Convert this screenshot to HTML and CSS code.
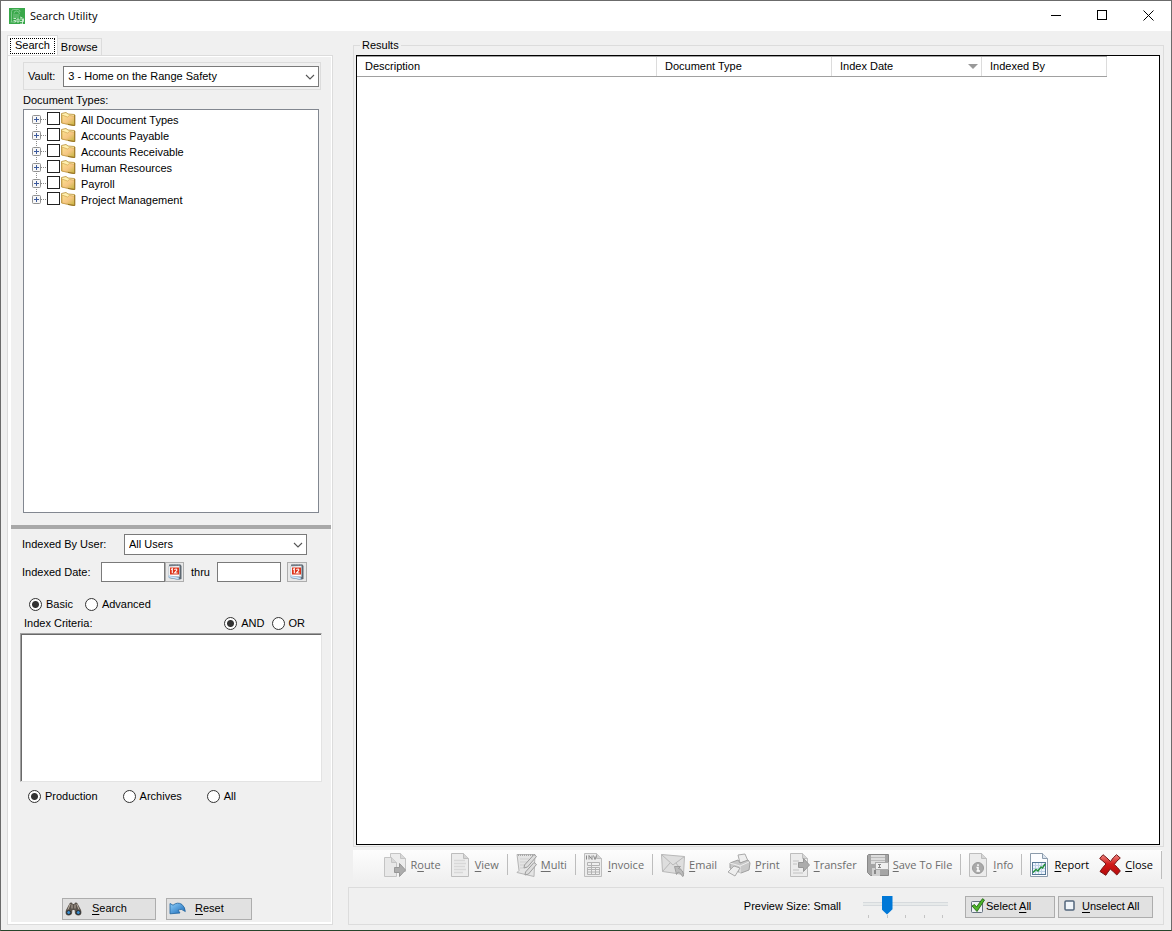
FILE: index.html
```html
<!DOCTYPE html>
<html lang="en">
<head>
<meta charset="utf-8">
<title>Search Utility</title>
<link rel="stylesheet" href="styles.css">
</head>
<body>
<svg class="defs" aria-hidden="true">
  <defs>
    <linearGradient id="gold" x1="0" y1="0" x2="1" y2="1"><stop offset="0" stop-color="#fbe28c"/><stop offset=".5" stop-color="#f6c684"/><stop offset="1" stop-color="#c2b53c"/></linearGradient>
    <linearGradient id="blue" x1="0" y1="0" x2="1" y2="1"><stop offset="0" stop-color="#8fd0fb"/><stop offset="1" stop-color="#1464b4"/></linearGradient>
    <linearGradient id="red" x1="0" y1="0" x2="0" y2="1"><stop offset="0" stop-color="#f08a84"/><stop offset=".45" stop-color="#d01a1a"/><stop offset="1" stop-color="#b50808"/></linearGradient>
    <symbol id="chevron" viewBox="0 0 10 6"><path d="M1 1l4 4 4-4" fill="none" stroke="#555" stroke-width="1.1"/></symbol>
    <symbol id="expander" viewBox="0 0 14 16"><path d="M4.500 0v16M9 8.500h5" stroke="#8a8a8a" stroke-dasharray="1 1"/><rect x=".5" y="4.500" width="8" height="8" rx="1" fill="#f7f7f7" stroke="#919191"/><path d="M2 8.500h5M4.500 6v5" stroke="#3c5a9c"/></symbol>
    <symbol id="folder" viewBox="0 0 15 14"><path d="M.5 1.500L5 .5l2 1.500 6.500.5v8l-1 3L.5 11z" fill="#fff0b0" stroke="#b58c32" stroke-width=".8"/><path d="M1 3l5.500 2 2-1.500 5 .7v9.200L1.200 11z" fill="url(#gold)" stroke="#c79a48" stroke-width=".6"/><path d="M13.800 3v10.500L7 12.500" fill="none" stroke="#93701f"/></symbol>
    <symbol id="calendar" viewBox="0 0 14 16"><path d="M2 .5h10.500l1 1.500v13l-3 .8L1 14z" fill="#5d6872"/><path d="M.8 2.200L11.500 1.800v11H.8z" fill="#fff" stroke="#a2aebb" stroke-width=".6"/><path d="M1 1.200h11" stroke="#727c86" stroke-width="1.400" stroke-dasharray="1 .6"/><rect x="2" y="3.500" width="9" height="7" fill="#dc3219"/><path d="M3 5.500l1.300-.8v4.600M6.300 5.500q2.800-1.300 2.500.8L6.500 9h3" fill="none" stroke="#fff" stroke-width="1.100"/><path d="M.8 11.800l10 1.700v2l-10-2z" fill="#dcefff" stroke="#7ea8d0" stroke-width=".5"/></symbol>
    <symbol id="sheet" viewBox="0 0 18 24"><path d="M.5.500h12l5 5v18H.500z" fill="#ececec" stroke="#bdbdbd"/><path d="M12.500.500v5h5" fill="#d5d5d5" stroke="#bdbdbd"/></symbol>
    <symbol id="arrow" viewBox="0 0 12 14"><path d="M.5 4.500h5v-4l6 6.500-6 6.500v-4h-5z" fill="#acacac" stroke="#979797"/></symbol>
  </defs>
</svg>
<div class="window">
  <header class="titlebar">
    <svg class="logo" width="16" height="16" viewBox="0 0 16 16" aria-hidden="true"><rect width="16" height="16" fill="#39a84a"/><path d="M2.500 14V3.500Q2.500 1.500 4.500 1.500h4.500q2 0 2 2.500M1.500 14h3M4 7h6.500M4 9h6M5 5.500Q5 3 7.500 3T10.500 6" fill="none" stroke="#8fd09a" stroke-width=".8"/><path d="M4.500 10.500h2.500M4.500 12.500h2v1.500H4.500M8 14v-3h2v3zM11 11h2.500v5H11M11 13.500h3.500v-3M11 9l2.500 1" fill="none" stroke="#d4efd8" stroke-width=".9"/></svg>
    <h1 class="title">Search Utility</h1>
    <div class="window-controls">
      <button class="window-button" aria-label="Minimize"><svg width="11" height="11"><path d="M0 5.500h10" stroke="#000"/></svg></button>
      <button class="window-button" aria-label="Maximize"><svg width="11" height="11"><rect x=".5" y=".5" width="9" height="9" fill="none" stroke="#000"/></svg></button>
      <button class="window-button" aria-label="Close window"><svg width="11" height="11"><path d="M.5.500l10 10M10.500.500l-10 10" stroke="#000"/></svg></button>
    </div>
  </header>
  <main class="content">
    <section class="sidebar">
      <div class="tabs" role="tablist">
        <button class="tab tab-active" role="tab" aria-selected="true"><span class="focus">Search</span></button>
        <button class="tab" role="tab" aria-selected="false">Browse</button>
      </div>
      <div class="tab-panel">
        <div class="pane pane-types">
          <div class="vault">
            <label for="vault">Vault:</label>
            <div class="select-box"><select id="vault"><option>3 - Home on the Range Safety</option></select><svg class="chevron"><use href="#chevron"/></svg></div>
          </div>
          <div class="types-label">Document Types:</div>
          <ul class="tree">
            <li class="node"><button class="expand" aria-label="Expand"><svg width="14" height="16"><use href="#expander"/></svg></button><label class="node-label"><input type="checkbox" class="check"><svg width="15" height="14"><use href="#folder"/></svg><span class="node-text">All Document Types</span></label></li>
            <li class="node"><button class="expand" aria-label="Expand"><svg width="14" height="16"><use href="#expander"/></svg></button><label class="node-label"><input type="checkbox" class="check"><svg width="15" height="14"><use href="#folder"/></svg><span class="node-text">Accounts Payable</span></label></li>
            <li class="node"><button class="expand" aria-label="Expand"><svg width="14" height="16"><use href="#expander"/></svg></button><label class="node-label"><input type="checkbox" class="check"><svg width="15" height="14"><use href="#folder"/></svg><span class="node-text">Accounts Receivable</span></label></li>
            <li class="node"><button class="expand" aria-label="Expand"><svg width="14" height="16"><use href="#expander"/></svg></button><label class="node-label"><input type="checkbox" class="check"><svg width="15" height="14"><use href="#folder"/></svg><span class="node-text">Human Resources</span></label></li>
            <li class="node"><button class="expand" aria-label="Expand"><svg width="14" height="16"><use href="#expander"/></svg></button><label class="node-label"><input type="checkbox" class="check"><svg width="15" height="14"><use href="#folder"/></svg><span class="node-text">Payroll</span></label></li>
            <li class="node"><button class="expand" aria-label="Expand"><svg width="14" height="16"><use href="#expander"/></svg></button><label class="node-label"><input type="checkbox" class="check"><svg width="15" height="14"><use href="#folder"/></svg><span class="node-text">Project Management</span></label></li>
          </ul>
        </div>
        <div class="splitter"></div>
        <div class="pane pane-criteria">
          <div class="user-row">
            <label class="user-label" for="user">Indexed By User:</label>
            <div class="select-box"><select id="user"><option>All Users</option></select><svg class="chevron"><use href="#chevron"/></svg></div>
          </div>
          <div class="date-row">
            <label class="date-label" for="from">Indexed Date:</label>
            <input class="date" id="from" type="text">
            <button class="date-button" aria-label="Choose start date"><svg width="14" height="16"><use href="#calendar"/></svg></button>
            <label class="thru" for="to">thru</label>
            <input class="date" id="to" type="text">
            <button class="date-button date-button-apart" aria-label="Choose end date"><svg width="14" height="16"><use href="#calendar"/></svg></button>
          </div>
          <div class="mode-row">
            <label class="option"><input type="radio" class="radio" name="mode" checked>Basic</label>
            <label class="option"><input type="radio" class="radio" name="mode">Advanced</label>
          </div>
          <div class="criteria-head">
            <label for="criteria">Index Criteria:</label>
            <div class="operators">
              <label class="option"><input type="radio" class="radio" name="op" checked>AND</label>
              <label class="option"><input type="radio" class="radio" name="op">OR</label>
            </div>
          </div>
          <textarea class="criteria" id="criteria"></textarea>
          <div class="source-row">
            <label class="option"><input type="radio" class="radio" name="source" checked>Production</label>
            <label class="option"><input type="radio" class="radio" name="source">Archives</label>
            <label class="option"><input type="radio" class="radio" name="source">All</label>
          </div>
          <div class="actions">
            <button class="button button-search"><svg width="17" height="14" viewBox="0 0 17 14"><path d="M4.500 1.500Q5.500 0 7 .8L7.800 2h1.400L10 .8q1.500-.8 2.500.7L16 8q1.500 5-2.500 5.500-4 0-3.700-4L9.500 8h-2l-.3 1.500q.3 4-3.700 4Q-.5 13 1 8z" fill="#5a534c"/><path d="M5.200 2L3 7.500M11.800 2L14 7.500M7 2.500v4M10 2.500v4" stroke="#b9aea2"/><circle cx="3.700" cy="10.500" r="2" fill="#3b8ed0" stroke="#2b2b2b"/><circle cx="13.300" cy="10.500" r="2" fill="#3b8ed0" stroke="#2b2b2b"/></svg><span><u>S</u>earch</span></button>
            <button class="button button-reset"><svg width="17" height="13" viewBox="0 0 17 13"><path d="M1 1.500l3 1.700Q8.500-.5 13 2.500q3 2.500 3.300 7Q12 6 9 8l2 3L1 11.800z" fill="url(#blue)" stroke="#20639e" stroke-width=".8"/></svg><span><u>R</u>eset</span></button>
          </div>
        </div>
      </div>
    </section>
    <section class="main">
      <fieldset class="results">
        <legend>Results</legend>
        <div class="list">
          <table class="table">
            <thead><tr><th class="col-description">Description</th><th class="col-type">Document Type</th><th class="col-date"><span class="sorted">Index Date<svg width="10" height="5"><path d="M0 0h10L5 5z" fill="#999"/></svg></span></th><th class="col-by">Indexed By</th></tr></thead>
          </table>
        </div>
      </fieldset>
      <div class="toolbar" role="toolbar">
        <button class="tool" disabled><svg width="22" height="24" viewBox="0 0 22 24"><path d="M6.500.500h10l5 5v13h-15z" fill="#ececec" stroke="#c4c4c4"/><path d="M16.500.500v5h5" fill="#d8d8d8" stroke="#c4c4c4"/><path d="M.5 4.500h7l5 5v14H.5z" fill="#e8e8e8" stroke="#c4c4c4"/><path d="M7.500 4.500v5h5" fill="#d8d8d8" stroke="#c4c4c4"/><path d="M10.500 14.500h5v-4l6 6.500-6 6.500v-4h-5z" fill="#acacac" stroke="#979797"/></svg><span>R<u>o</u>ute</span></button>
        <button class="tool tool-sheet" disabled><svg width="18" height="24" viewBox="0 0 18 24"><use href="#sheet"/><path d="M3 7.500h11M3 10.500h12M3 13.500h11M3 16.500h12M3 19.500h9" stroke="#d8d8d8" stroke-width="1.500"/></svg><span><u>V</u>iew</span></button>
        <span class="separator"></span>
        <button class="tool" disabled><svg width="21" height="24" viewBox="0 0 21 24"><path d="M1 1.500h18l-1 22L1 19.500l2-2z" fill="#e4e4e4" stroke="#b5b5b5"/><path d="M2 2h17" stroke="#a8a8a8" stroke-width="2" stroke-dasharray="1 1"/><path d="M4 6h9M4 9h8M4 12h5M4 15h4" stroke="#cfcfcf"/><path d="M8.500 12L18 1.500l2.500 2L11.500 14l-3.500 1zM9.500 19L18 9.500l2.500 2L12.500 21 9 22z" fill="#ddd" stroke="#9c9c9c"/></svg><span><u>M</u>ulti</span></button>
        <span class="separator"></span>
        <button class="tool tool-sheet" disabled><svg width="18" height="24" viewBox="0 0 18 24"><use href="#sheet"/><path d="M2.500 2.500v4M5 6.500v-4l3 4v-4M9.500 2.500l1.500 4 1.500-4" fill="none" stroke="#888"/><path d="M3.500 9.500h12v3h-12zM3.500 14.500h12v7h-12zM3.500 16.500h12M3.500 19h12M7.500 9.500v12M11.500 14.500v7" fill="#eee" stroke="#b2b2b2"/></svg><span><u>I</u>nvoice</span></button>
        <span class="separator"></span>
        <button class="tool" disabled><svg width="24" height="24" viewBox="0 0 24 24"><path d="M.5 1.500l23 2-1 18-21-3z" fill="#dedede" stroke="#b8b8b8"/><path d="M.5 1.500L12 12 23.500 3.500M1.500 18.500L9 10M15 10l8 11" fill="none" stroke="#b8b8b8"/><path d="M13.500 13.500h6l-2 2q5 1 5 7.500l-1 .5q-1.500-3.500-4.500-4.500l-1.500 2.500z" fill="#bbb" stroke="#949494" stroke-width=".8"/></svg><span><u>E</u>mail</span></button>
        <button class="tool" disabled><svg width="24" height="24" viewBox="0 0 24 24"><path d="M11 2l7-1 3 7-8 2z" fill="#eee" stroke="#aaa"/><path d="M3 10l8-3 2 3 8-3 2 3-1 7-8 3-11-5z" fill="#c8c8c8" stroke="#a0a0a0"/><path d="M3 10l10 3 9-4M13 13v7" fill="none" stroke="#eee"/><path d="M1 19l6-6 6 2-5 8z" fill="#eee" stroke="#aaa"/></svg><span><u>P</u>rint</span></button>
        <button class="tool" disabled><svg width="20" height="24" viewBox="0 0 20 24"><use href="#sheet" width="18" height="24"/><path d="M3 8h6M3 11h4M3 17h6M3 20h10" stroke="#d0d0d0" stroke-width="1.500"/><use href="#arrow" x="8" y="5" width="12" height="14"/></svg><span><u>T</u>ransfer</span></button>
        <button class="tool" disabled><svg width="22" height="22" viewBox="0 0 22 22"><path d="M1.500.500h20v21h-18l-3-3v-17z" fill="#a5a5a5" stroke="#888"/><path d="M4 1h14v9H4z" fill="#ddd"/><path d="M4 3.500h14M4 6.500h14" stroke="#bbb"/><path d="M5 14h8v8H5z" fill="#cfcfcf"/><path d="M7 16h2v4H7z" fill="#888"/><rect x="8.500" y="8.500" width="13" height="7" fill="#f0f0f0" stroke="#aaa"/><path d="M11 10.500h3M11 13.500h3M12.500 10.500v3" stroke="#888"/></svg><span><u>S</u>ave To File</span></button>
        <span class="separator"></span>
        <button class="tool tool-sheet" disabled><svg width="18" height="24" viewBox="0 0 18 24"><use href="#sheet"/><circle cx="9" cy="15" r="5.500" fill="#aaa" stroke="#999"/><path d="M9 11.300v1.700M7.500 14.500H9V18M7.500 18h3.500" fill="none" stroke="#fff" stroke-width="1.500"/></svg><span><u>I</u>nfo</span></button>
        <span class="separator"></span>
        <button class="tool tool-sheet"><svg width="18" height="24" viewBox="0 0 18 24"><path d="M.5.500h12l5 5v18H.500z" fill="#fcfdff" stroke="#8b9bab"/><path d="M12.500.500v5h5" fill="#dce4ee" stroke="#8b9bab"/><rect x="2.500" y="9.500" width="13" height="12" fill="#eef4fc" stroke="#557896"/><path d="M5.500 10v11M8.500 10v11M11.500 10v11M3 12.500h12M3 15.500h12M3 18.500h12" stroke="#bed0e6"/><path d="M3 19.500l3-3 2 1.500 3-4 1.500 1 2.500-4" fill="none" stroke="#23913b" stroke-width="1.500"/></svg><span><u>R</u>eport</span></button>
        <button class="tool"><svg width="22" height="22" viewBox="0 0 22 22"><path d="M4 .7q4 3 7.500 6.800Q14 3.500 17.500.700L21.300 4Q17.500 7 15.300 10.500q3.500 3 6 6.500l-3.500 4q-3.500-3.500-6.500-6-2.500 3-4.500 6.300L1 17.500q2.500-4 6-7.500Q4 7 .7 4.500z" fill="url(#red)" stroke="#721414"/></svg><span><u>C</u>lose</span></button>
        <span class="grip"></span>
      </div>
      <footer class="footer">
        <label for="size">Preview Size: Small</label>
        <div class="slider">
          <input type="range" id="size" min="0" max="4" value="1">
          <div class="ticks"><i></i><i></i><i></i><i></i><i></i></div>
        </div>
        <button class="button button-select"><svg width="16" height="16" viewBox="0 0 16 16"><rect x="1.500" y="3.500" width="11" height="11" rx="1" fill="#eef1f5" stroke="#63707e"/><path d="M2 8l2.500-1.500L6.500 9 12.500.700l2 1.300L7 13.500z" fill="#4fb52b" stroke="#226a12" stroke-width=".9"/></svg><span>Select <u>A</u>ll</span></button>
        <button class="button button-unselect"><svg width="12" height="12" viewBox="0 0 12 12"><rect x="1" y="1" width="9" height="9" rx="1" fill="#f0f5fa" stroke="#52667c" stroke-width="1.500"/></svg><span><u>U</u>nselect All</span></button>
      </footer>
    </section>
  </main>
</div>
</body>
</html>
```
FILE: styles.css
```css
* { box-sizing: border-box; }
body { margin: 0; color: #000; background: #f0f0f0; }
body, button, input, select, textarea { font: 11px/13px "Liberation Sans", Arial, sans-serif; }
button { padding: 0; color: inherit; }
svg { display: block; flex: none; }
u { text-underline-offset: 2px; }
.defs { position: absolute; width: 0; height: 0; }

.window { display: flex; flex-direction: column; min-height: 100vh; border: 1px solid #6b6b6b; border-bottom-color: #26452b; }
.titlebar { display: flex; align-items: center; height: 30px; padding: 0 0 1px 8px; background: #fff; }
.title { margin: 0 0 0 5px; font: 11px/16px "Open Sans", sans-serif; }
.window-controls { display: flex; height: 100%; margin-left: auto; }
.window-button { display: grid; place-items: center; width: 46px; border: 0; background: none; }

.content { flex: 1; display: flex; gap: 15px; padding: 4px 7px 5px 6px; }
.sidebar { display: flex; flex-direction: column; width: 326px; flex: none; }
.tabs { display: flex; align-items: flex-end; height: 20px; }
.tab { height: 17px; padding: 1px 3px 0; border: 1px solid #dcdcdc; border-width: 1px 1px 0 0; background: #f0f0f0; }
.tab-active { height: 21px; margin-bottom: -1px; padding: 1px 2px 2px; border-left-width: 1px; background: #fff; }
.focus { display: block; padding: 0 4px 1px; border: 1px dotted #000; }
.tab-panel { flex: 1; display: flex; flex-direction: column; padding: 1px 1px 2px 3px; border: 1px solid #dcdcdc; background: #fff; }
.pane { display: flex; flex-direction: column; background: #f0f0f0; }
.pane-types { flex: 1; padding: 5px 10px 12px 12px; }
.vault { display: flex; align-items: center; gap: 8px; padding: 3px 1px 2px 4px; border: 1px solid #dcdcdc; }
.select-box { position: relative; flex: 1; }
.chevron { position: absolute; top: 8px; right: 4px; width: 10px; height: 6px; pointer-events: none; }
select { appearance: none; display: block; width: 100%; height: 21px; padding: 0 20px 0 4px; border: 1px solid #7a7a7a; border-radius: 0; color: #000; background: #fff; }
.types-label { margin: 4px 0 2px; }
.tree { flex: 1; margin: 0 2px 0 0; padding: 1px 8px; border: 1px solid #828790; background: #fff; list-style: none; }
.node { display: flex; align-items: center; height: 16px; }
.expand { border: 0; background: none; }
.node:first-child .expand { clip-path: inset(4px 0 0 0); }
.node:last-child .expand { clip-path: inset(0 0 3px 0); }
.node-label { display: flex; align-items: center; gap: 1px; }
.check { appearance: none; width: 13px; height: 13px; margin: 0 0 2px 1px; border: 1px solid #222; background: #fff; }
.node-text { padding: 2px 0 0 4px; }
.splitter { height: 4px; background: #a8a8a8; }

.pane-criteria { padding: 5px 9px 2px; }
.user-row { display: flex; align-items: center; margin: 0 15px 7px 2px; }
.user-label { width: 102px; }
.date-row { display: flex; align-items: center; height: 20px; margin-left: 2px; }
.date-label { width: 79px; }
.date { width: 64px; height: 20px; padding: 0 3px; border: 1px solid #7a7a7a; border-radius: 0; background: #fff; }
.date-button { display: grid; place-items: center; width: 19px; height: 20px; border: 1px solid #adadad; background: #e8e8e8; }
.date-button-apart { width: 20px; margin-left: 6px; }
.thru { width: 33px; padding-left: 7px; }
.option { display: flex; align-items: center; gap: 4px; }
.radio { appearance: none; width: 13px; height: 13px; margin: 0; border: 1px solid #333; border-radius: 50%; background: #fff; }
.radio:checked { background: radial-gradient(circle, #333 3px, #fff 4px); }
.mode-row { display: flex; gap: 12px; margin: 16px 0 0 9px; }
.criteria-head { display: flex; align-items: center; justify-content: space-between; margin: 6px 17px 3px 4px; }
.operators { display: flex; gap: 7px; }
.criteria { height: 149px; padding: 2px; border: 1px solid #e3e3e3; border-top: 1px solid #a0a0a0; border-left: 1px solid #a0a0a0; border-radius: 0; background: #fff; box-shadow: inset 1px 1px #696969; resize: none; }
.source-row { display: flex; gap: 25px; margin: 8px 0 0 8px; }
.actions { display: flex; gap: 10px; margin: 95px 0 0 42px; }
.button { display: flex; align-items: center; height: 22px; padding: 0 4px 1px; border: 1px solid #adadad; background: #e1e1e1; }
.button-search { width: 94px; gap: 10px; padding-left: 2px; }
.button-reset { width: 86px; gap: 9px; padding-left: 2px; }

.main { flex: 1; display: flex; flex-direction: column; min-width: 0; }
.results { flex: 1; display: flex; flex-direction: column; min-width: 0; margin: 4px 0 0 5px; padding: 3px 3px 1px 2px; border: 1px solid #dcdcdc; }
.results legend { margin-left: 4px; padding: 0 2px; }
.list { flex: 1; border: 1px solid #000; background: #fff; }
.table { width: 750px; max-width: 100%; table-layout: fixed; border-collapse: collapse; }
.table th { height: 20px; padding: 0 8px; border: solid #a0a0a0; border-width: 1px 0; box-shadow: inset -1px 0 #dcdcdc; text-align: left; font-weight: normal; }
.col-description { width: 300px; }
.col-type { width: 175px; }
.col-date { width: 150px; }
.col-by { width: 125px; }
.sorted { display: flex; align-items: center; justify-content: space-between; margin-right: -4px; }
.toolbar { display: flex; align-items: center; justify-content: flex-end; gap: 8px; height: 31px; margin: 3px 2px 0 5px; padding-bottom: 2px; background: linear-gradient(#fdfdfd, #f0f0f0); font: 11px/16px "Open Sans", sans-serif; white-space: nowrap; }
.tool { display: flex; align-items: center; gap: 4px; border: 0; background: none; font: inherit; }
.tool + .tool { margin-left: 2px; }
.tool-sheet { gap: 6px; }
.tool:disabled { color: #6d6d6d; }
.separator { width: 1px; height: 21px; background: #bdbdbd; }
.grip { width: 1px; height: 28px; background: #bdbdbd; }
.footer { display: flex; align-items: center; justify-content: flex-end; height: 38px; margin-top: 6px; padding: 1px 10px 0 0; border: 1px solid #dcdcdc; }
.slider { width: 85px; margin: 0 17px 0 22px; }
.slider input { appearance: none; display: block; width: 100%; height: 19px; margin: 0; background: linear-gradient(#e7eaea, #e7eaea) 0 7px / 100% 2px no-repeat, linear-gradient(#d6dadd, #d6dadd) 0 6px / 100% 4px no-repeat; }
.slider input::-webkit-slider-thumb { appearance: none; width: 11px; height: 19px; background: #0078d7; clip-path: polygon(0 0, 100% 0, 100% 72%, 50% 100%, 0 72%); }
.ticks { display: flex; justify-content: space-between; padding: 0 5px; }
.ticks i { width: 1px; height: 3px; background: #c4c4c4; }
.button-select { width: 90px; gap: 0; }
.button-unselect { width: 95px; gap: 6px; margin-left: 3px; padding-left: 5px; }
```
